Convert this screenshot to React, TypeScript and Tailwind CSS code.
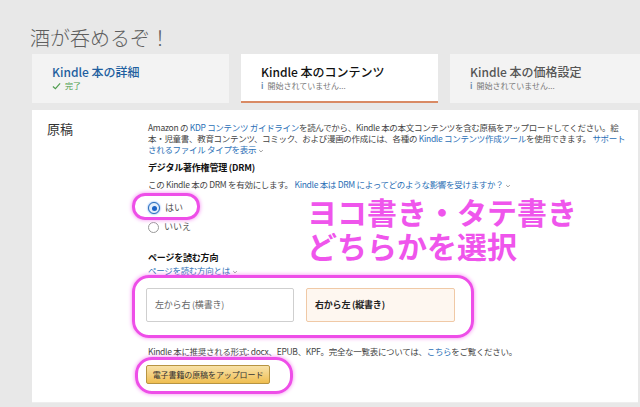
import React from "react";

const font = "font-['Noto_Sans_CJK_JP','Noto_Sans',sans-serif]";

function Chevron() {
  return (
    <svg width="6" height="6" viewBox="0 0 10 10" className="inline-block ml-[2px] align-middle" fill="none" stroke="#888" strokeWidth="1.4">
      <polyline points="2 3.5 5 6.5 8 3.5" />
    </svg>
  );
}

const tabs = [
  { title: "Kindle 本の詳細", status: "完了", done: true, active: false },
  { title: "Kindle 本のコンテンツ", status: "開始されていません...", done: false, active: true },
  { title: "Kindle 本の価格設定", status: "開始されていません...", done: false, active: false },
];

function Tab({ t }: { t: (typeof tabs)[number] }) {
  const titleColor = t.done ? "text-[#1f5f9f]" : t.active ? "text-[#111]" : "text-[#555]";
  return (
    <div
      className={`pl-[20px] pt-[10px] ${t.active ? "bg-white border-b-2 border-[#d98a64]" : "bg-[#f3f3f3]"} ${
        t.title.includes("価格") ? "flex-1" : "w-[197px]"
      }`}
    >
      <p className={`text-[12px] leading-[16px] font-medium ${titleColor}`}>{t.title}</p>
      <p className="text-[8px] leading-[12px] flex items-center gap-[4px] text-[#777]">
        {t.done ? (
          <svg width="9" height="8" viewBox="0 0 10 8" fill="none" stroke="#4f9d4f" strokeWidth="1.3">
            <polyline points="1 4.5 3.8 7 9 1" />
          </svg>
        ) : (
          <span className="text-[8px] text-[#6b8bb0] font-bold">i</span>
        )}
        <span className={t.done ? "text-[#4f9d4f]" : ""}>{t.status}</span>
      </p>
    </div>
  );
}

function Radio({ checked, label }: { checked: boolean; label: string }) {
  return (
    <div className="flex items-center gap-[5px] h-[14px]">
      {checked ? (
        <span className="w-[12px] h-[12px] rounded-full border border-[#2a6fb8] bg-[#e3eefb] flex items-center justify-center shadow-[0_0_2px_#3b82f6]">
          <span className="w-[5px] h-[5px] rounded-full bg-[#1b63c6]" />
        </span>
      ) : (
        <span className="w-[11px] h-[11px] rounded-full border border-[#999] bg-white" />
      )}
      <span className="text-[9px] text-[#555]">{label}</span>
    </div>
  );
}

const A = "text-[#2b6fb6]";
const body = "text-[8.5px] tracking-[-0.3px]";

export default function App() {
  return (
    <div className={`relative w-[640px] h-[407px] overflow-hidden bg-[#e8e8e8] ${font}`}>
      <h1 className="pl-[30px] pt-[26px] text-[20px] leading-[24px] font-light text-[#5e5e5e]">酒が呑めるぞ！</h1>

      <div className="mt-[4px] ml-[32px] flex gap-[12px] h-[49px]">
        {tabs.map((t) => (
          <Tab key={t.title} t={t} />
        ))}
      </div>

      <div className="mt-[7px] ml-[32px] mr-[2px] h-[293px] bg-white flex border-b border-[#eee]">
        <div className="w-[116px] pl-[15px] pt-[11px] text-[13px] leading-[16px] text-[#333]">原稿</div>

        <div className="w-[482px] pt-[12px] text-[#444]">
          <p className={`${body} leading-[11px]`}>
            Amazon の <span className={A}>KDP コンテンツ ガイドライン</span>を読んでから、Kindle 本の本文コンテンツを含む原稿をアップロードしてください。絵本・児童書、教育コンテンツ、コミック、および漫画の作成には、各種の{" "}
            <span className={A}>Kindle コンテンツ作成ツール</span>を使用できます。{" "}
            <span className={A}>サポートされるファイル タイプを表示</span>
            <Chevron />
          </p>

          <p className="mt-[7px] text-[9px] tracking-[-0.2px] leading-[12px] font-bold text-[#111]">デジタル著作権管理 (DRM)</p>
          <p className={`mt-[4px] ${body} leading-[12px]`}>
            この Kindle 本の DRM を有効にします。 <span className={A}>Kindle 本は DRM によってどのような影響を受けますか？</span>
            <Chevron />
          </p>

          <div className="mt-[11px] flex flex-col gap-[5px]">
            <Radio checked label="はい" />
            <Radio checked={false} label="いいえ" />
          </div>

          <p className="mt-[18px] text-[9px] tracking-[-0.2px] leading-[12px] font-bold text-[#111]">ページを読む方向</p>
          <p className={`${body} leading-[12px]`}>
            <span className={A}>ページを読む方向とは</span>
            <Chevron />
          </p>

          <div className="mt-[12px] -ml-[2px] flex gap-[12px]">
            <div className="w-[148px] h-[34px] rounded-[2px] border border-[#cfcfcf] bg-white flex items-center pl-[8px] text-[9px] tracking-[-0.2px] text-[#666]">
              左から右 (横書き)
            </div>
            <div className="w-[149px] h-[34px] rounded-[2px] border border-[#f0c9a6] bg-[#fef7f0] flex items-center pl-[8px] text-[9px] tracking-[-0.2px] font-bold text-[#222]">
              右から左 (縦書き)
            </div>
          </div>

          <p className={`mt-[23px] ${body} leading-[12px]`}>
            Kindle 本に推奨される形式: docx、EPUB、KPF。完全な一覧表については、<span className={A}>こちら</span>をご覧ください。
          </p>

          <div className="mt-[8px] -ml-[2px] w-[124px] h-[19px] rounded-[2px] border border-[#b79442] bg-gradient-to-b from-[#f8e2a8] to-[#efbe4e] flex items-center justify-center text-[8px] tracking-[-0.1px] text-[#333]">
            電子書籍の原稿をアップロード
          </div>
        </div>
      </div>

      {/* annotations */}
      <div className="absolute left-[132px] top-[193px] w-[68px] h-[27px] rounded-[13px] border-[3px] border-[#ee4ee8] shadow-[0_0_4px_#f48af0]" />
      <div className="absolute left-[132px] top-[275px] w-[342px] h-[63px] rounded-[17px] border-[3px] border-[#ee4ee8] shadow-[0_0_4px_#f48af0]" />
      <div className="absolute left-[135px] top-[357px] w-[158px] h-[37px] rounded-[17px] border-[3px] border-[#ee4ee8] shadow-[0_0_4px_#f48af0]" />
      <div className="absolute left-[307px] top-[194px] text-[30px] leading-[34px] font-bold text-[#ef55ec]">
        <p>ヨコ書き・タテ書き</p>
        <p>どちらかを選択</p>
      </div>
    </div>
  );
}
